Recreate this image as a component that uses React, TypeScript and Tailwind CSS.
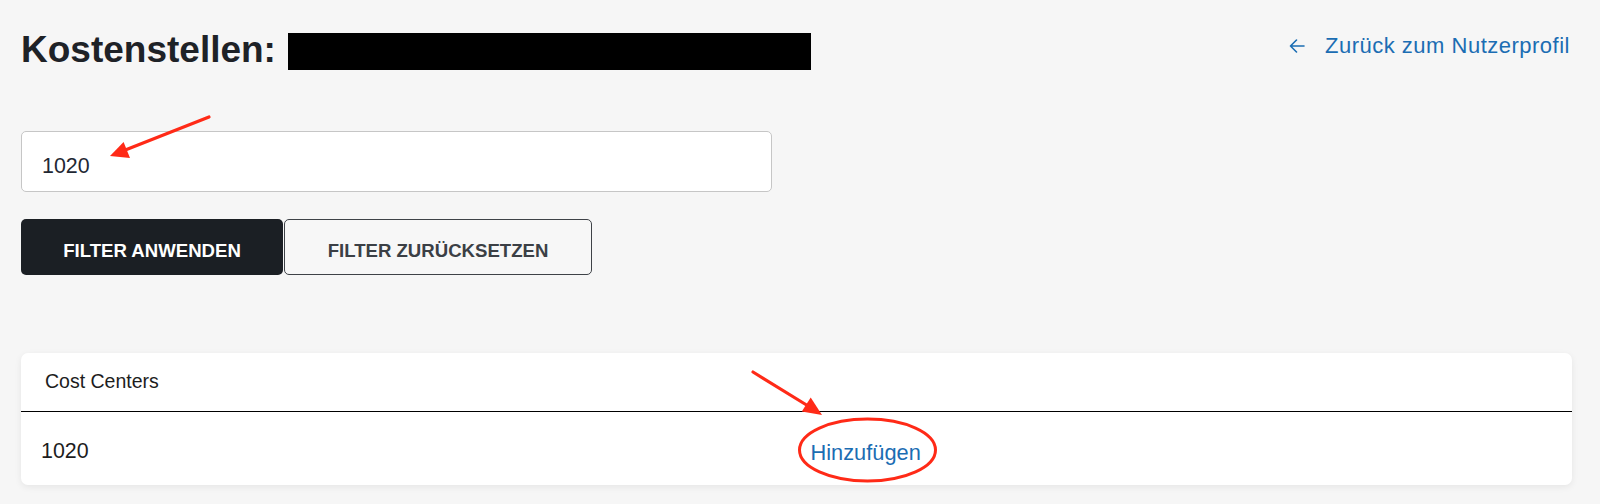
import React from "react";

function BackArrow() {
  return (
    <svg width="16" height="14" viewBox="0 0 16 14" fill="none" className="shrink-0">
      <path d="M15 7H1.5M7.5 1L1.5 7l6 6" stroke="#1b6db3" strokeWidth="1.6" strokeLinecap="round" strokeLinejoin="round" />
    </svg>
  );
}

function Annotations() {
  const red = "#ff2a17";
  return (
    <svg
      className="absolute left-0 top-0 pointer-events-none"
      width="1600"
      height="504"
      viewBox="0 0 1600 504"
      fill="none"
    >
      {/* arrow to input value */}
      <line x1="209" y1="117" x2="124" y2="150.5" stroke={red} strokeWidth="3.2" strokeLinecap="round" />
      <polygon points="110,156 123.6,142 130,158" fill={red} />
      {/* arrow to Hinzufügen */}
      <line x1="753" y1="372" x2="809" y2="406.5" stroke={red} strokeWidth="3.2" strokeLinecap="round" />
      <polygon points="822,415 801.8,411.6 810.7,397.6" fill={red} />
      {/* ellipse */}
      <ellipse cx="867.5" cy="450" rx="68" ry="31" stroke={red} strokeWidth="3" />
    </svg>
  );
}

export default function App() {
  return (
    <div className="relative min-h-screen w-full bg-[#f6f6f6] font-['Liberation_Sans',Arial,sans-serif] pl-[21px] pr-[28px] pt-[28px] pb-[20px]">
      {/* Header */}
      <div className="flex items-start justify-between">
        <h1 className="flex items-center text-[37px] leading-[44px] font-bold text-[#1e2227]">
          <span>Kostenstellen:</span>
          <span className="ml-[12px] mt-[2px] inline-block h-[37px] w-[523px] bg-black" />
        </h1>
        <a className="mt-[5px] flex items-center gap-[20px] text-[22px] leading-[26px] tracking-[0.5px] text-[#1b6db3] mr-[2px]">
          <BackArrow />
          <span>Zurück zum Nutzerprofil</span>
        </a>
      </div>

      {/* Filter input */}
      <div className="mt-[59px]">
        <input
          readOnly
          value="1020"
          className="h-[61px] w-[751px] rounded-[5px] border border-[#c6c6c6] bg-white px-[20px] pt-[10px] text-[21.4px] text-[#1f2833] outline-none"
        />
      </div>

      {/* Buttons */}
      <div className="mt-[27px] flex gap-[1px]">
        <button className="flex h-[56px] w-[262px] items-center justify-center rounded-[5px] bg-[#1b1f24] pt-[8px] text-[18.6px] font-bold text-white">
          FILTER ANWENDEN
        </button>
        <button className="flex h-[56px] w-[308px] items-center justify-center rounded-[5px] border-[1.5px] border-[#3e4247] bg-[#f7f7f7] pt-[8px] text-[18.6px] font-bold text-[#3b3f45]">
          FILTER ZURÜCKSETZEN
        </button>
      </div>

      {/* Card */}
      <div className="mt-[78px] overflow-hidden rounded-[7px] bg-white shadow-[0_2px_7px_rgba(0,0,0,0.07)]">
        <div className="flex h-[59px] items-center border-b-[1.5px] border-black pl-[24px] text-[19.5px] text-[#1d1d1d]">
          Cost Centers
        </div>
        <div className="grid h-[73px] grid-cols-2 items-center">
          <div className="pl-[20px] pt-[5px] text-[21.4px] text-[#1d1d1d]">1020</div>
          <div className="pl-[14px] pt-[9px] text-[21.8px] text-[#1b6db3]">Hinzufügen</div>
        </div>
      </div>

      <Annotations />
    </div>
  );
}
